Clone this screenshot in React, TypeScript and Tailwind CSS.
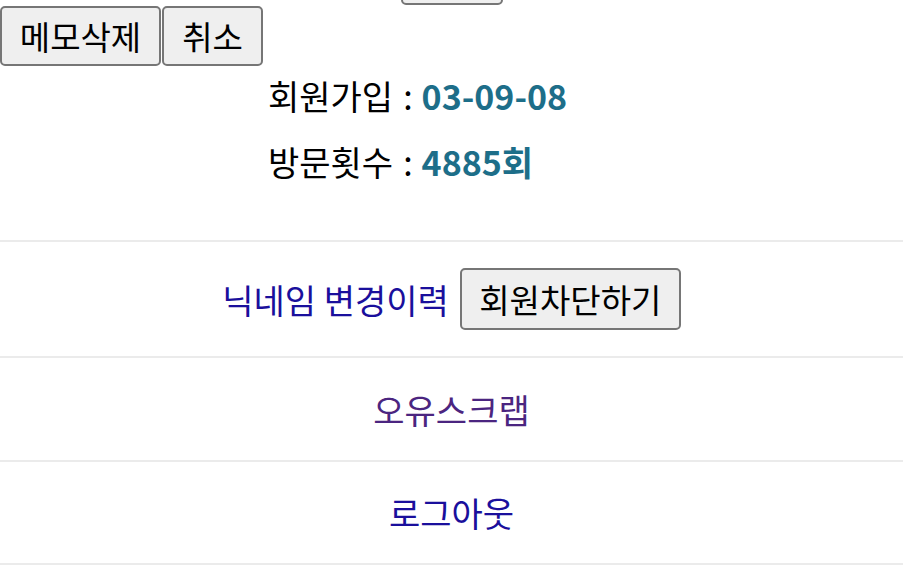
const font = { fontFamily: '"Noto Sans CJK KR", "Noto Sans", sans-serif' };

function Btn({ children, className = "" }: { children: React.ReactNode; className?: string }) {
	return (
		<button
			className={`h-[60px] rounded-[5px] border-2 border-[#767676] bg-[#efefef] text-[33px] leading-none text-black ${className}`}>
			{children}
		</button>
	);
}

function Row({ children, className = "" }: { children: React.ReactNode; className?: string }) {
	return (
		<div className={`flex items-center justify-center border-b-2 border-[#ebebeb] ${className}`}>
			{children}
		</div>
	);
}

function Info({ label, value }: { label: string; value: string }) {
	return (
		<div>
			{label}
			<span className="ml-[10px] mr-[9px]">:</span>
			<span className="font-bold text-[#1d6e89]">{value}</span>
		</div>
	);
}

export default function App() {
	return (
		<div className="w-[903px] h-[566px] overflow-hidden bg-white" style={font}>
			{/* button cut off at the top edge */}
			<div className="flex h-[5px] items-end overflow-hidden pl-[401px]">
				<div className="h-[60px] w-[102px] shrink-0 rounded-[5px] border-2 border-[#767676] bg-[#efefef]" />
			</div>

			<div className="mt-[1px] flex">
				<Btn className="w-[161px]">메모삭제</Btn>
				<Btn className="ml-[1px] w-[101px]">취소</Btn>
			</div>

			<div className="flex flex-col gap-[30px] pl-[268px] pt-[12px] pb-[60px] text-[34px] leading-[36px] text-black">
				<Info label="회원가입" value="03-09-08" />
				<Info label="방문횟수" value="4885회" />
			</div>

			<div className="border-t-2 border-[#ebebeb]" />

			<Row className="h-[116px] gap-[11px]">
				<a className="text-[34px] text-[#1a0f9c]">닉네임 변경이력</a>
				<Btn className="h-[62px] w-[221px]">회원차단하기</Btn>
			</Row>

			<Row className="h-[104px]">
				<a className="text-[34px] text-[#4b2580]">오유스크랩</a>
			</Row>

			<Row className="h-[103px]">
				<a className="text-[34px] text-[#1a0f9c]">로그아웃</a>
			</Row>
		</div>
	);
}
